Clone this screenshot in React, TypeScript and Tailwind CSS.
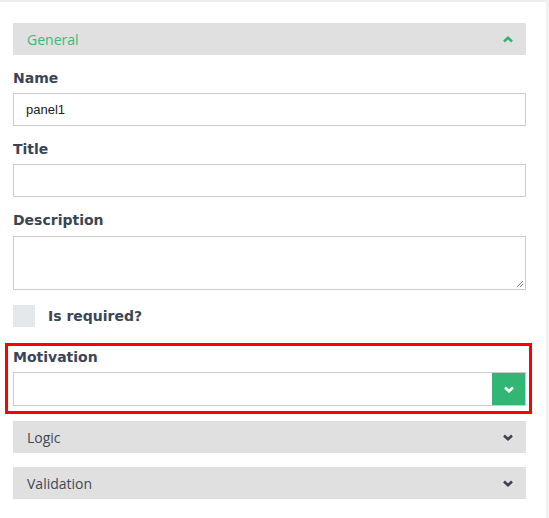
import React from 'react';

const labelFont = { fontFamily: '"DejaVu Sans", Verdana, sans-serif' };
const sansFont = { fontFamily: '"Open Sans", "Noto Sans", sans-serif' };

const Chevron = ({ up = false, className = '' }: { up?: boolean; className?: string }) => (
  <svg width="10" height="7" viewBox="0 0 10 7" className={className}>
    <path
      d={up ? 'M1 5.5 L5 1.8 L9 5.5' : 'M1 1.5 L5 5.2 L9 1.5'}
      fill="none"
      stroke="currentColor"
      strokeWidth="2.6"
      strokeLinejoin="miter"
    />
  </svg>
);

const SectionBar = ({ title, open = false }: { title: string; open?: boolean }) => (
  <div className="flex h-8 items-center justify-between bg-[#e0e0e0] pl-[14px] pr-[13px]">
    <span className={`text-[14px] ${open ? 'text-[#3cb878]' : 'text-[#404856]'}`} style={sansFont}>
      {title}
    </span>
    <Chevron up={open} className={open ? 'text-[#2fb573]' : 'text-[#3a4250]'} />
  </div>
);

const Label = ({ children }: { children: React.ReactNode }) => (
  <div className="text-[14px] font-bold leading-4 text-[#3a4556]" style={labelFont}>
    {children}
  </div>
);

export default function App() {
  return (
    <div className="flex h-[518px] w-[549px] bg-white">
      <div className="flex-1 border-t-2 border-[#ececec] pt-[21px]">
        <div className="pl-[13px] pr-[20px]">
          <SectionBar title="General" open />
        </div>

        <div className="pl-[13px] pr-[20px] pt-[15px]">
          <Label>Name</Label>
          <div className="mt-[7px] flex h-[33px] items-center border border-[#cccccc] px-3 text-[13px] text-[#222]" style={{ fontFamily: '"Liberation Sans", Arial, sans-serif' }}>
            panel1
          </div>

          <div className="mt-[15px]">
            <Label>Title</Label>
          </div>
          <div className="mt-[7px] h-[33px] border border-[#cccccc]" />

          <div className="mt-[15px]">
            <Label>Description</Label>
          </div>
          <div className="relative mt-[8px] h-[54px] border border-[#cccccc]">
            <svg width="8" height="8" viewBox="0 0 8 8" className="absolute bottom-[1px] right-[1px]">
              <path d="M7 1 L1 7 M7 4 L4 7" stroke="#888" strokeWidth="1" />
            </svg>
          </div>

          <div className="mt-[15px] flex items-center">
            <div className="h-[22px] w-[22px] bg-[#e4e8eb]" />
            <span className="ml-[13px] text-[14px] font-bold text-[#3a4556]" style={labelFont}>
              Is required?
            </span>
          </div>
        </div>

        <div className="ml-[5px] mr-[14px] mt-[16px] border-[3px] border-[#ff0000] pb-[5px] pl-[5px] pr-[3px] pt-[3px]">
          <Label>Motivation</Label>
          <div className="mt-[7px] flex h-[34px] border border-[#cccccc]">
            <div className="flex-1" />
            <div className="flex w-[33px] items-center justify-center bg-[#31b673] text-white">
              <Chevron />
            </div>
          </div>
        </div>

        <div className="flex flex-col gap-[14px] pl-[13px] pr-[20px] pt-[7px]">
          <SectionBar title="Logic" />
          <SectionBar title="Validation" />
        </div>
      </div>
      <div className="w-[3px] bg-[#f1f1f1]" />
    </div>
  );
}
